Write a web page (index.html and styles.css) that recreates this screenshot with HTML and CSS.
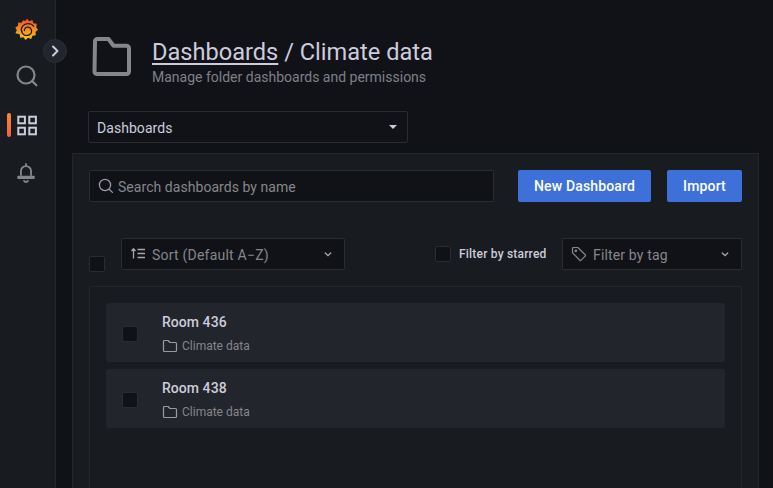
FILE: index.html
```html
<!DOCTYPE html>
<html lang="en">
<head>
<meta charset="utf-8">
<title>Climate data</title>
<link rel="stylesheet" href="styles.css">
</head>
<body>
<div class="app">
  <nav class="sidebar">
    <div class="nav-item logo">
      <svg width="23" height="23" viewBox="0 0 24 24">
        <defs><linearGradient id="g" x1="0" y1="1" x2="0" y2="0"><stop offset="0" stop-color="#fcc80f"/><stop offset="0.45" stop-color="#f6921e"/><stop offset="1" stop-color="#ef4f2b"/></linearGradient></defs>
        <path fill="url(#g)" d="M12.500 .5l2.300 3 3.400-1.500.9 3.600 3.600.3-.5 3.700 1.800 2.600-2.600 2.400.3 3.500-3.500.4-1.300 3.300-3.300-1.100-2.600 2.300-2.100-2.900-3.500.4-.5-3.500L.4 15.800l1.500-3.100L.3 10l2.800-1.800.1-3.500 3.500.3L8.600 2.300l2.500.9z"/>
        <path fill="none" stroke="#181b1f" stroke-width="1.300" stroke-linecap="round" d="M19.500 8.500C17 5.200 10.800 5 7.900 8.500 5 12.300 7.500 18.200 12.300 18.200c3.300 0 5.200-2.300 5-4.800-.2-2.500-2.200-4-4.400-3.800-2 .2-3.300 1.800-3.100 3.500"/>
      </svg>
    </div>
    <div class="nav-item search-nav">
      <svg width="24" height="24" viewBox="0 0 24 24" fill="none" stroke="#85868c" stroke-width="2.200" stroke-linecap="round"><circle cx="11" cy="11" r="8.500"/><path d="M17.400 17.400l4 3.900"/></svg>
    </div>
    <div class="nav-item apps-nav">
      <span class="active-bar"></span>
      <svg width="24" height="24" viewBox="0 0 24 24" fill="none" stroke="#ccccdc" stroke-width="2"><rect x="3.300" y="3.700" width="6.600" height="6.600"/><rect x="14.300" y="3.700" width="6.600" height="6.600"/><rect x="3.300" y="14.700" width="6.600" height="6.600"/><rect x="14.300" y="14.700" width="6.600" height="6.600"/></svg>
    </div>
    <div class="nav-item bell-nav">
      <svg width="22" height="22" viewBox="0 0 24 24" fill="none" stroke="#85868c" stroke-width="2" stroke-linejoin="round"><path d="M12 2.500v2.300M6.500 16v-5a5.500 5.500 0 0 1 11 0v5"/><path d="M3.500 17h17v1.500h-17z" fill="#85868c"/><path d="M9.500 21a2.600 2.600 0 0 0 5 0"/></svg>
    </div>
    <button class="expand" aria-label="Expand">
      <svg width="14" height="14" viewBox="0 0 14 14" fill="none" stroke="#ccccdc" stroke-width="2" stroke-linecap="round" stroke-linejoin="round"><path d="M5 2.500l4.500 4.500L5 11.500"/></svg>
    </button>
  </nav>
  <main class="main">
    <header class="page-header">
      <svg class="folder-big" width="48" height="48" viewBox="0 0 48 48" fill="none" stroke="#85868c" stroke-width="4" stroke-linejoin="round"><path d="M7 9.500a2.500 2.500 0 0 1 2.500-2.500h11l5 6.800h13a2.500 2.500 0 0 1 2.500 2.500v23.200a2.500 2.500 0 0 1-2.500 2.500h-29A2.500 2.500 0 0 1 6.500 39.500z"/></svg>
      <div class="titles">
        <h1 class="title"><a class="crumb">Dashboards</a> / Climate data</h1>
        <div class="subtitle">Manage folder dashboards and permissions</div>
      </div>
    </header>
    <div class="tab-select">
      <span class="txt">Dashboards</span>
      <svg width="10" height="6" viewBox="0 0 10 6"><path fill="#ccccdc" d="M1 1h8L5 5z"/></svg>
    </div>
    <section class="panel">
      <div class="action-row">
        <label class="input search">
          <svg width="16" height="16" viewBox="0 0 16 16" fill="none" stroke="#9a9ba2" stroke-width="1.300" stroke-linecap="round"><circle cx="7" cy="7" r="5.600"/><path d="M11.200 11.200l3.200 3.200"/></svg>
          <span class="txt">Search dashboards by name</span>
        </label>
        <button class="btn btn-new">New Dashboard</button>
        <button class="btn btn-import">Import</button>
      </div>
      <div class="filter-row">
        <span class="check check-all"></span>
        <div class="input sort">
          <svg width="16" height="16" viewBox="0 0 16 16" fill="none" stroke="#a6a7ad" stroke-width="1.300"><path d="M3.500 13V3.500M1.500 5.500l2-2.200 2 2.200M7.500 4h7.500M7.500 8h7.500M7.500 12h7.500" transform="translate(0 -.5)"/></svg>
          <span class="grow txt">Sort (Default A−Z)</span>
          <svg class="chev" width="16" height="16" viewBox="0 0 16 16" fill="none" stroke="#a6a7ad" stroke-width="1.300" stroke-linecap="round"><path d="M5.300 7l2.700 2.700L10.700 7"/></svg>
        </div>
        <span class="check check-star"></span>
        <span class="star-label">Filter by starred</span>
        <div class="input tag">
          <svg width="16" height="16" viewBox="0 0 16 16" fill="none" stroke="#85868c" stroke-width="1.200" stroke-linejoin="round"><path d="M1.500 2.500a1 1 0 0 1 1-1h4.300l7.400 7.300a1 1 0 0 1 0 1.400l-4 4a1 1 0 0 1-1.400 0L1.500 6.800z"/><circle cx="4.800" cy="4.800" r=".8"/></svg>
          <span class="grow txt">Filter by tag</span>
          <svg class="chev" width="16" height="16" viewBox="0 0 16 16" fill="none" stroke="#a6a7ad" stroke-width="1.300" stroke-linecap="round"><path d="M5.300 7l2.700 2.700L10.700 7"/></svg>
        </div>
      </div>
      <div class="results">
        <article class="row">
          <span class="check check-row"></span>
          <div class="row-text">
            <div class="row-title">Room 436</div>
            <div class="row-meta">
              <svg width="16" height="16" viewBox="0 0 16 16" fill="none" stroke="#9a9ba2" stroke-width="1.200" stroke-linejoin="round"><path d="M1.500 3.500a1 1 0 0 1 1-1h3.700l1.700 2h5.600a1 1 0 0 1 1 1v7a1 1 0 0 1-1 1h-11a1 1 0 0 1-1-1z"/></svg>
              <span>Climate data</span>
            </div>
          </div>
        </article>
        <article class="row">
          <span class="check check-row"></span>
          <div class="row-text">
            <div class="row-title">Room 438</div>
            <div class="row-meta">
              <svg width="16" height="16" viewBox="0 0 16 16" fill="none" stroke="#9a9ba2" stroke-width="1.200" stroke-linejoin="round"><path d="M1.500 3.500a1 1 0 0 1 1-1h3.700l1.700 2h5.600a1 1 0 0 1 1 1v7a1 1 0 0 1-1 1h-11a1 1 0 0 1-1-1z"/></svg>
              <span>Climate data</span>
            </div>
          </div>
        </article>
      </div>
    </section>
  </main>
</div>
</body>
</html>
```

FILE: styles.css
```css
* { box-sizing: border-box; }
html, body { margin: 0; height: 488px; overflow: hidden; background: #111217; }
body { font-family: Roboto, "Noto Sans", sans-serif; color: #ccccdc; font-size: 14px; }
.app { display: flex; width: 773px; height: 488px; overflow: hidden; }

.sidebar { position: relative; flex: 0 0 56px; background: #181b1f; border-right: 1px solid #24262b; display: flex; flex-direction: column; align-items: center; padding-top: 16px; padding-right: 3px; }
.nav-item { display: flex; align-items: center; justify-content: center; width: 24px; height: 24px; }
.logo { margin-left: 1px; }
.logo svg { margin-top: 2px; }
.search-nav { margin-top: 24px; margin-left: 1px; }
.apps-nav { margin-top: 25px; margin-left: 2px; }
.bell-nav { margin-top: 23px; }
.active-bar { position: absolute; left: 7px; top: 113px; width: 4px; height: 24px; border-radius: 2px; background: linear-gradient(0deg, #f55f3e, #ff8833); }
.expand { position: absolute; left: 43px; top: 39px; width: 24px; height: 24px; padding: 0; border-radius: 50%; border: 1px solid #2c2e33; background: #22252b; display: flex; align-items: center; justify-content: center; z-index: 2; }

.main { flex: 1; min-width: 0; padding: 38px 14px 0 16px; display: flex; flex-direction: column; }
.page-header { flex: none; display: flex; align-items: center; height: 48px; }
.folder-big { flex: none; margin-left: 16px; margin-top: -13px; }
.titles { margin-left: 16px; }
.title { margin: 0; font-size: 23.6px; font-weight: 400; line-height: 28px; color: #ccccdc; white-space: nowrap; }
.crumb { color: #ccccdc; text-decoration: underline; text-underline-offset: 3px; }
.subtitle { font-size: 14px; line-height: 18px; color: #7e8088; margin-top: 2px; }

.tab-select { flex: none; margin: 25px 0 0 16px; width: 320px; height: 32px; background: #111217; border: 1px solid #2a2c31; border-radius: 2px; display: flex; align-items: center; justify-content: space-between; padding: 0 9px 0 8px; letter-spacing: .05px; }
.panel { flex: none; margin-top: 10px; background: #181b1f; border: 1px solid #24262b; padding: 16px; height: 420px; }

.action-row { display: flex; align-items: center; height: 32px; }
.input { display: flex; align-items: center; height: 32px; background: #111217; border: 1px solid #2a2c31; border-radius: 2px; color: #85868c; padding: 0 8px; }
.txt { margin-top: 2px; }
.search { width: 405px; margin-right: 24px; }
.search .txt { margin-left: 4px; letter-spacing: .05px; }
.btn { height: 32px; border: 0; border-radius: 2px; background: #3d71d9; color: #fff; font: 500 14px Roboto, sans-serif; letter-spacing: .15px; padding: 0 16px; }
.btn-new { width: 133px; margin-right: 16px; }
.btn-import { width: 75px; }

.filter-row { display: flex; align-items: flex-start; margin-top: 36px; height: 32px; }
.check { display: block; flex: none; width: 16px; height: 16px; background: #111217; border: 1px solid #2a2c31; border-radius: 2px; }
.check-all { margin-top: 18px; margin-right: 16px; }
.sort { width: 224px; margin-right: 90px; }
.sort .grow { margin-left: 6px; letter-spacing: .22px; }
.grow { flex: 1; white-space: nowrap; }
.check-star { margin-top: 8px; margin-right: 8px; }
.star-label { font-size: 12px; font-weight: 500; line-height: 33px; width: 103px; color: #ccccdc; letter-spacing: .2px; }
.tag { width: 180px; }
.tag .grow { margin-left: 6px; letter-spacing: .15px; }
.chev { flex: none; }

.results { margin-top: 16px; height: 300px; border: 1px solid #24262b; border-radius: 2px; padding: 16px; display: flex; flex-direction: column; gap: 7px; }
.row { display: flex; height: 59px; background: #22252b; border-radius: 2px; align-items: center; padding-left: 16px; }
.check-row { margin-top: 2px; }
.row-text { margin-left: 24px; margin-top: 1px; }
.row-title { font-weight: 500; font-size: 14px; line-height: 20px; color: #ccccdc; letter-spacing: .05px; }
.row-meta { display: flex; align-items: center; gap: 4px; font-size: 12px; line-height: 16px; color: #85868c; margin-top: 6px; }
```
